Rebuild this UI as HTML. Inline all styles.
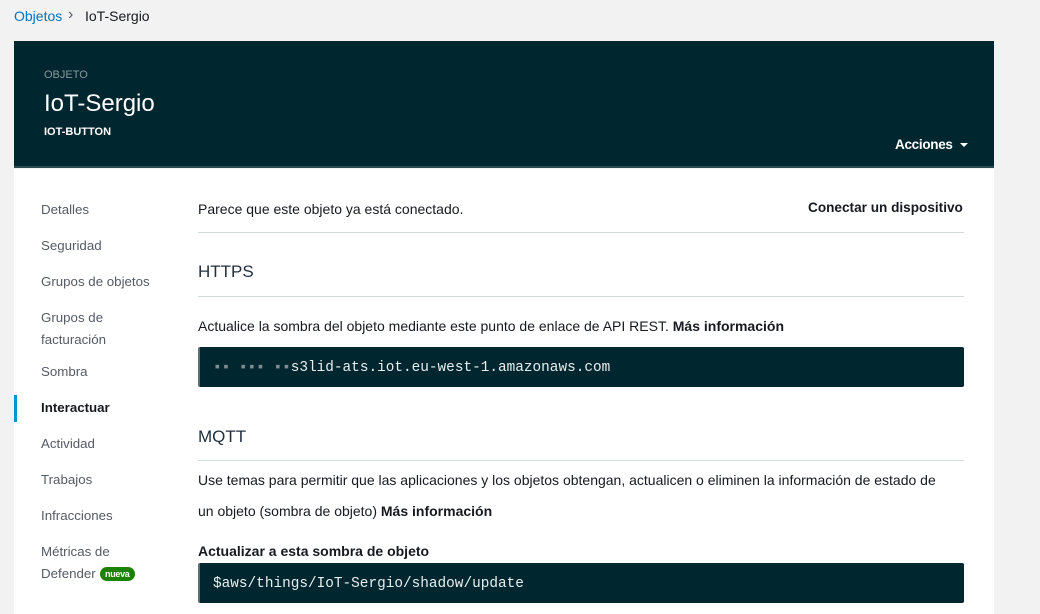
<!DOCTYPE html>
<html><head><meta charset="utf-8"><style>
*{margin:0;padding:0;box-sizing:border-box}
body{width:1040px;height:614px;overflow:hidden;background:#f2f2f2;font-family:"Liberation Sans",sans-serif;font-size:14px;color:#16191f;position:relative}
.a{position:absolute;white-space:nowrap}
.hdr{position:absolute;left:14px;top:41px;width:980px;height:127px;background:#00262f;border-bottom:2px solid #2a4a52}
.card{position:absolute;left:14px;top:169px;width:980px;height:445px;background:#fff}
.nav{color:#545b64;font-size:13.3px}
.line{position:absolute;left:198px;width:766px;height:1px;background:#d5dbdb}
.code{position:absolute;left:198px;width:766px;height:40px;background:#00262f;border-left:2px solid #5f6b6d;border-radius:2px;color:#e8eeee;font-family:"Liberation Mono",monospace;font-size:14.4px;padding:13px 0 0 13px;white-space:nowrap}
b{font-weight:bold;color:#16191f}
</style></head><body>
<div class="a" style="left:14px;top:8px;font-size:14px;color:#0073bb">Objetos</div>
<div class="a" style="left:68px;top:6px;font-size:16px;color:#545b64">&#8250;</div>
<div class="a" style="left:85px;top:8px;font-size:14px;color:#16191f">IoT-Sergio</div>
<div class="hdr"></div>
<div class="a" style="left:44px;top:69px;font-size:11px;color:#8a9a9e">OBJETO</div>
<div class="a" style="left:44px;top:90px;font-size:24px;color:#fff">IoT-Sergio</div>
<div class="a" style="left:44px;top:126px;font-size:11px;color:#fff;font-weight:bold">IOT-BUTTON</div>
<div class="a" style="left:895px;top:137px;font-size:13.5px;color:#fff;font-weight:bold;letter-spacing:-0.3px">Acciones</div>
<div class="a" style="left:960px;top:143px;width:0;height:0;border-left:4px solid transparent;border-right:4px solid transparent;border-top:4px solid #fff"></div>
<div class="card"></div>
<div class="a nav" style="left:41px;top:202px">Detalles</div>
<div class="a nav" style="left:41px;top:238px">Seguridad</div>
<div class="a nav" style="left:41px;top:274px">Grupos de objetos</div>
<div class="a nav" style="left:41px;top:310px">Grupos de</div>
<div class="a nav" style="left:41px;top:332px">facturación</div>
<div class="a nav" style="left:41px;top:364px">Sombra</div>
<div class="a" style="left:14px;top:395px;width:3px;height:27px;background:#0099c6"></div>
<div class="a" style="left:41px;top:400px;color:#16191f;font-weight:bold;font-size:13.3px">Interactuar</div>
<div class="a nav" style="left:41px;top:436px">Actividad</div>
<div class="a nav" style="left:41px;top:472px">Trabajos</div>
<div class="a nav" style="left:41px;top:508px">Infracciones</div>
<div class="a nav" style="left:41px;top:544px">Métricas de</div>
<div class="a nav" style="left:41px;top:566px">Defender</div>
<div class="a" style="left:100px;top:567px;background:#1d8102;color:#fff;font-size:9px;font-weight:bold;border-radius:8px;padding:2px 5px;letter-spacing:-0.3px">nueva</div>
<div class="a" style="left:198px;top:201px">Parece que este objeto ya está conectado.</div>
<div class="a" style="left:808px;top:200px;font-weight:bold;font-size:13.6px">Conectar un dispositivo</div>
<div class="line" style="top:232px"></div>
<div class="a" style="left:198px;top:262px;font-size:17px;color:#232f3e">HTTPS</div>
<div class="line" style="top:296px"></div>
<div class="a" style="left:198px;top:318px">Actualice la sombra del objeto mediante este punto de enlace de API REST. <b>Más información</b></div>
<div class="code" style="top:347px"><span style="color:#7f8c8e">▪▪ ▪▪▪ ▪▪</span>s3lid-ats.iot.eu-west-1.amazonaws.com</div>
<div class="a" style="left:198px;top:427px;font-size:17px;color:#232f3e">MQTT</div>
<div class="line" style="top:460px"></div>
<div class="a" style="left:198px;top:472px">Use temas para permitir que las aplicaciones y los objetos obtengan, actualicen o eliminen la información de estado de</div>
<div class="a" style="left:198px;top:503px">un objeto (sombra de objeto) <b>Más información</b></div>
<div class="a" style="left:198px;top:543px;font-weight:bold">Actualizar a esta sombra de objeto</div>
<div class="code" style="top:563px">$aws/things/IoT-Sergio/shadow/update</div>
</body></html>
